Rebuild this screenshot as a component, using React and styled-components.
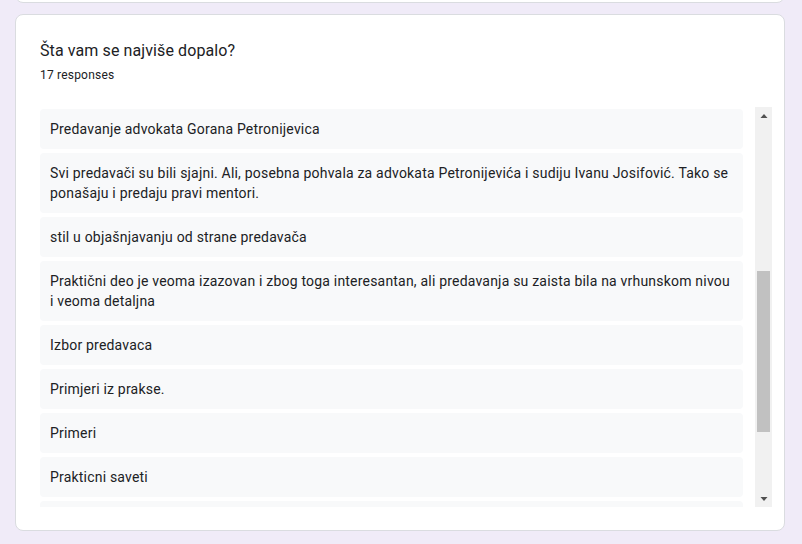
import React from "react";
import styled, { createGlobalStyle } from "styled-components";

const Global = createGlobalStyle`
  html, body { margin: 0; padding: 0; background: #f0ebf8; }
  body { font-family: Roboto, "Noto Sans", Arial, sans-serif; color: #202124; }
`;

const Page = styled.div`
  height: 544px;
  overflow: hidden;
  padding-left: 15px;
  display: flex;
  flex-direction: column;
  box-sizing: border-box;
`;

const PrevCard = styled.div`
  width: 770px;
  height: 20px;
  margin-top: -17px;
  box-sizing: border-box;
  background: #fff;
  border: 1px solid #dadce0;
  border-radius: 8px;
  flex-shrink: 0;
`;

const Card = styled.section`
  width: 770px;
  margin-top: 11px;
  box-sizing: border-box;
  background: #fff;
  border: 1px solid #dadce0;
  border-radius: 8px;
  padding: 24px 12px 23px 24px;
  flex-shrink: 0;
`;

const Title = styled.h2`
  margin: 0;
  font-size: 16px;
  line-height: 24px;
  font-weight: 400;
  letter-spacing: 0.1px;
  color: #202124;
`;

const Count = styled.div`
  margin-top: 4px;
  font-size: 12px;
  line-height: 16px;
  color: #202124;
  letter-spacing: 0.2px;
`;

const ListArea = styled.div`
  margin-top: 24px;
  height: 400px;
  display: flex;
  gap: 12px;
`;

const Viewport = styled.div`
  flex: 1;
  overflow: hidden;
  padding-top: 2px;
  display: flex;
  flex-direction: column;
  gap: 4px;
`;

const Item = styled.div`
  background: #f8f9fa;
  border-radius: 4px;
  padding: 10px;
  min-height: 20px;
  font-size: 14px;
  line-height: 20px;
  color: #202124;
  letter-spacing: 0.2px;
  flex-shrink: 0;
`;

const Scrollbar = styled.div`
  width: 17px;
  background: #f1f1f1;
  display: flex;
  flex-direction: column;
`;

const ArrowBtn = styled.div`
  height: 17px;
  display: flex;
  align-items: center;
  justify-content: center;
  flex-shrink: 0;
`;

const Track = styled.div`
  flex: 1;
  display: flex;
  flex-direction: column;
`;

const Thumb = styled.div`
  margin: 0 2px;
  background: #c1c1c1;
`;

const Arrow = ({ down }) => (
  <svg width="8" height="4" viewBox="0 0 8 4">
    {down ? (
      <polygon points="0.5,0 7.5,0 4,4" fill="#505050" />
    ) : (
      <polygon points="4,0 7.5,4 0.5,4" fill="#505050" />
    )}
  </svg>
);

const responses = [
  "Predavanje advokata Gorana Petronijevica",
  "Svi predavači su bili sjajni. Ali, posebna pohvala za advokata Petronijevića i sudiju Ivanu Josifović. Tako se ponašaju i predaju pravi mentori.",
  "stil u objašnjavanju od strane predavača",
  "Praktični deo je veoma izazovan i zbog toga interesantan, ali predavanja su zaista bila na vrhunskom nivou i veoma detaljna",
  "Izbor predavaca",
  "Primjeri iz prakse.",
  "Primeri",
  "Prakticni saveti",
  "",
];

export default function App() {
  const thumbTop = 147;
  const thumbHeight = 161;
  return (
    <>
      <Global />
      <Page>
        <PrevCard />
        <Card>
          <Title>Šta vam se najviše dopalo?</Title>
          <Count>17 responses</Count>
          <ListArea>
            <Viewport>
              {responses.map((r, i) => (
                <Item key={i}>{r}</Item>
              ))}
            </Viewport>
            <Scrollbar>
              <ArrowBtn>
                <Arrow />
              </ArrowBtn>
              <Track>
                <Thumb style={{ marginTop: thumbTop, height: thumbHeight }} />
              </Track>
              <ArrowBtn>
                <Arrow down />
              </ArrowBtn>
            </Scrollbar>
          </ListArea>
        </Card>
      </Page>
    </>
  );
}
